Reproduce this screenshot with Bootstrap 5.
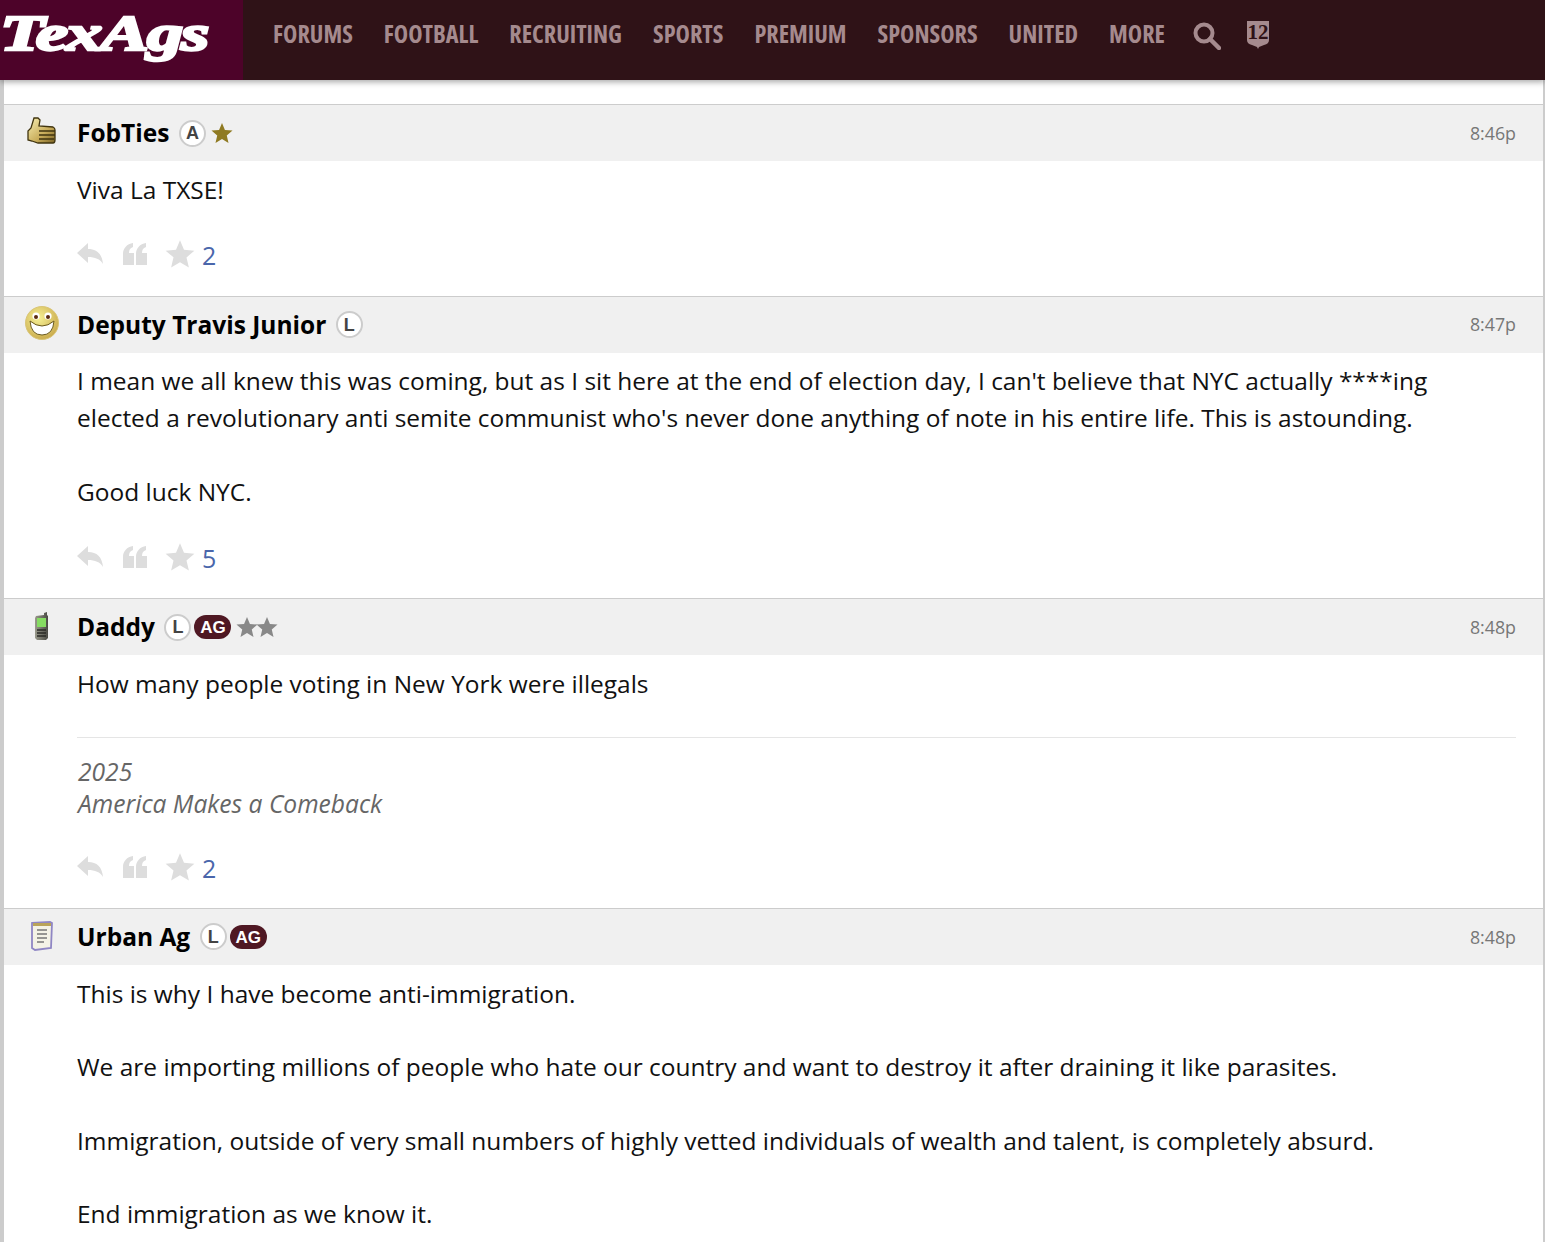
<!DOCTYPE html>
<html lang="en">
<head>
<meta charset="utf-8" />
<meta name="viewport" content="width=device-width, initial-scale=1" />
<title>TexAgs</title>
<link href="https://cdn.jsdelivr.net/npm/bootstrap@5.3.0/dist/css/bootstrap.min.css" rel="stylesheet" />
<style>
  body { font-family: "Open Sans", sans-serif; background: #fff; color: #000; overflow: hidden; height: 1242px; }
  .top-bar { height: 80px; background: #2f1217; padding: 0; box-shadow: 0 2px 6px rgba(0,0,0,.35); position: relative; z-index: 2; flex-wrap: nowrap; justify-content: flex-start; }
  .logo-box { width: 243px; height: 80px; background: #4d0329; overflow: hidden; }
  .logo-text { font-family: "Liberation Serif", serif; font-weight: 700; font-style: italic; font-size: 50px; line-height: 1; color: #fff; display: inline-block; transform: scaleX(1.46); transform-origin: left top; margin: 8px 0 0 0; -webkit-text-stroke: 2.4px #fff; letter-spacing: -1.5px; }
  .top-links { padding-left: 30px; margin-top: -11px; }
  .top-link { font-stretch: 75%; font-weight: 700; font-size: 24.25px; line-height: 1; color: #a58a8e; text-decoration: none; white-space: nowrap; margin-right: 31px; }
  .top-links svg { margin-top: 2px; }
  .search-glyph { margin-left: -3px; }
  .shield-glyph { margin-left: 25px; }
  .page-wrap { border-left: 4px solid #ccc; border-right: 2px solid #ccc; padding-top: 24px; }
  .post-head { height: 57px; background: #f0f0f0; border-top: 1px solid #ccc; padding: 0 27px 0 73px; position: relative; }
  .avatar-icon { position: absolute; left: 20px; top: 9px; width: 36px; height: 36px; }
  .poster { font-weight: 700; font-size: 24.5px; line-height: 1; color: #000; }
  .ring-mark { width: 27px; height: 27px; border: 2px solid #ccc; border-radius: 50%; background: #fff; color: #444; font: 700 18px/1 "Liberation Sans", sans-serif; display: flex; align-items: center; justify-content: center; margin-left: 9.5px; }
  .ag-pill { width: 37px; height: 24px; border-radius: 12px; background: #4f1823; color: #fff; font: 700 17px/25px "Liberation Sans", sans-serif; text-align: center; margin-left: 3px; }
  .rank-star { width: 22px; height: 22px; margin-left: 5px; }
  .rank-star + .rank-star { margin-left: -2px; }
  .star-gold { fill: #8f7a22; }
  .star-gray { fill: #888; }
  .post-time { font-size: 17.8px; color: #777; }
  .post-body { padding: 10.6px 27px 21.4px 73px; font-size: 24.47px; line-height: 36.83px; color: #111; }
  .post-body p { margin: 0; }
  .sig-block { border-top: 1px solid #e5e5e5; margin-top: 34px; padding: 18px 0 1px 1px; font-style: italic; font-size: 24.6px; line-height: 32px; color: #666; }
  .act-row { height: 38px; margin-top: 28px; }
  .act-row svg { display: block; fill: #ddd; margin-top: -2px; }
  .act-quote { margin-left: 20px; }
  .act-star { margin-left: 18px; }
  .act-count { color: #4a66ab; font-size: 25px; line-height: 38px; margin-left: 7px; }
</style>
</head>
<body>

<svg width="0" height="0" class="d-block position-absolute">
  <symbol id="i-star" viewBox="0 0 24 24"><path d="M12 1l3.200 7.600 8.300.7-6.300 5.400 1.900 8.100L12 18.500 4.900 22.800l1.900-8.100L.5 9.300l8.300-.7z"/></symbol>
  <symbol id="i-reply" viewBox="0 0 26 24"><path d="M0 11L11 1v6c9 0 14 5 15 15-3-5-8-7-15-7v6z"/></symbol>
  <symbol id="i-quote" viewBox="0 0 24 24"><path d="M0 23V12C0 6 4 2 10 1v4c-3 1-4 3-4 6h5v12zM13 23V12c0-6 4-10 10-11v4c-3 1-4 3-4 6h5v12z"/></symbol>
</svg>

<nav class="navbar top-bar align-items-center">
  <a class="logo-box d-block text-decoration-none" href="#"><span class="logo-text">TexAgs</span></a>
  <div class="top-links d-flex align-items-center">
    <a class="top-link" href="#">FORUMS</a>
    <a class="top-link" href="#">FOOTBALL</a>
    <a class="top-link" href="#">RECRUITING</a>
    <a class="top-link" href="#">SPORTS</a>
    <a class="top-link" href="#">PREMIUM</a>
    <a class="top-link" href="#">SPONSORS</a>
    <a class="top-link" href="#">UNITED</a>
    <a class="top-link" href="#">MORE</a>
    <svg class="search-glyph" width="28" height="28" viewBox="0 0 28 28"><circle cx="11" cy="11" r="8.500" fill="none" stroke="#a58a8e" stroke-width="4"/><path d="M17 17l9 9" stroke="#a58a8e" stroke-width="4.500" stroke-linecap="round"/></svg>
    <svg class="shield-glyph" width="24" height="29" viewBox="0 0 24 29"><path d="M1 0h22v19q0 4-5 5l-5 2-1 2-1-2-5-2q-5-1-5-5z" fill="#a58a8e"/><text x="12" y="18" text-anchor="middle" font-family="Liberation Serif, serif" font-weight="700" font-size="21" fill="#2f1217">12</text></svg>
  </div>
</nav>

<main class="page-wrap">

  <article>
    <div class="post-head d-flex align-items-center">
      <svg class="avatar-icon" viewBox="0 0 36 36">
        <defs><linearGradient id="gold" x1="0" y1="0" x2="1" y2="1"><stop offset="0" stop-color="#f8f0b4"/><stop offset=".6" stop-color="#c9ad5b"/><stop offset="1" stop-color="#7a6223"/></linearGradient></defs>
        <path d="M10 4l4 0 2 2-1 6 14 1q2 1 2 3v10q0 3-2 3H14l-6-2-4-1v-9l3-3z" fill="url(#gold)" stroke="#40340f" stroke-width="1.300"/>
        <path d="M15 17h16M15 21h16M15 25h15" stroke="#40340f" stroke-width="1.500"/>
      </svg>
      <span class="poster">FobTies</span>
      <span class="ring-mark">A</span>
      <svg class="rank-star star-gold"><use href="#i-star"/></svg>
      <span class="post-time ms-auto">8:46p</span>
    </div>
    <div class="post-body">
      <p>Viva La TXSE!</p>
      <div class="act-row d-flex align-items-center">
        <svg width="26" height="24"><use href="#i-reply"/></svg>
        <svg class="act-quote" width="24" height="24"><use href="#i-quote"/></svg>
        <svg class="act-star" width="30" height="30"><use href="#i-star"/></svg>
        <span class="act-count">2</span>
      </div>
    </div>
  </article>

  <article>
    <div class="post-head d-flex align-items-center">
      <svg class="avatar-icon" viewBox="0 0 36 36">
        <defs><radialGradient id="smile" cx=".4" cy=".35" r=".7"><stop offset="0" stop-color="#f6f094"/><stop offset="1" stop-color="#c9a94a"/></radialGradient></defs>
        <circle cx="18" cy="17" r="16.500" fill="url(#smile)" stroke="#d9c577"/>
        <circle cx="12" cy="10" r="3.600" fill="#fff"/><circle cx="24" cy="10" r="3.600" fill="#fff"/>
        <circle cx="12" cy="11" r="2" fill="#5a2b10"/><circle cx="24" cy="11" r="2" fill="#5a2b10"/>
        <path d="M6 15q12 10 24 0q-1 14-12 14T6 15z" fill="#fff" stroke="#6b5a1d"/>
      </svg>
      <span class="poster">Deputy Travis Junior</span>
      <span class="ring-mark">L</span>
      <span class="post-time ms-auto">8:47p</span>
    </div>
    <div class="post-body">
      <p>I mean we all knew this was coming, but as I sit here at the end of election day, I can't believe that NYC actually ****ing<br>elected a revolutionary anti semite communist who's never done anything of note in his entire life. This is astounding.<br><br>Good luck NYC.</p>
      <div class="act-row d-flex align-items-center">
        <svg width="26" height="24"><use href="#i-reply"/></svg>
        <svg class="act-quote" width="24" height="24"><use href="#i-quote"/></svg>
        <svg class="act-star" width="30" height="30"><use href="#i-star"/></svg>
        <span class="act-count">5</span>
      </div>
    </div>
  </article>

  <article>
    <div class="post-head d-flex align-items-center">
      <svg class="avatar-icon" viewBox="0 0 36 36">
        <defs><linearGradient id="phone" x1="0" y1="0" x2="1" y2="0"><stop offset="0" stop-color="#9a9a8c"/><stop offset="1" stop-color="#4a4a44"/></linearGradient></defs>
        <path d="M20 5l3-1v3l1 1v22l-2 2h-9l-2-2V10l1-2 8-1z" fill="url(#phone)"/>
        <rect x="13" y="10" width="9" height="9" fill="#86dc62"/>
        <path d="M13 22h9M13 25h9M13 28h9" stroke="#2a2a26" stroke-width="1.300"/>
      </svg>
      <span class="poster">Daddy</span>
      <span class="ring-mark">L</span>
      <span class="ag-pill">AG</span>
      <svg class="rank-star star-gray"><use href="#i-star"/></svg>
      <svg class="rank-star star-gray"><use href="#i-star"/></svg>
      <span class="post-time ms-auto">8:48p</span>
    </div>
    <div class="post-body">
      <p>How many people voting in New York were illegals</p>
      <div class="sig-block">2025<br>America Makes a Comeback</div>
      <div class="act-row d-flex align-items-center">
        <svg width="26" height="24"><use href="#i-reply"/></svg>
        <svg class="act-quote" width="24" height="24"><use href="#i-quote"/></svg>
        <svg class="act-star" width="30" height="30"><use href="#i-star"/></svg>
        <span class="act-count">2</span>
      </div>
    </div>
  </article>

  <article>
    <div class="post-head d-flex align-items-center">
      <svg class="avatar-icon" viewBox="0 0 36 36">
        <path d="M8 5l18-1 2 1-1 25-16 2-3-2z" fill="#f4f2e6" stroke="#8f86c4" stroke-width="1.800"/>
        <path d="M9 5h18v3H9z" fill="#b9a35a"/>
        <path d="M13 12h10M13 16h10M13 20h10M13 24h7" stroke="#777" stroke-width="1.500"/>
      </svg>
      <span class="poster">Urban Ag</span>
      <span class="ring-mark">L</span>
      <span class="ag-pill">AG</span>
      <span class="post-time ms-auto">8:48p</span>
    </div>
    <div class="post-body">
      <p>This is why I have become anti-immigration.<br><br>We are importing millions of people who hate our country and want to destroy it after draining it like parasites.<br><br>Immigration, outside of very small numbers of highly vetted individuals of wealth and talent, is completely absurd.<br><br>End immigration as we know it.</p>
    </div>
  </article>

</main>

<script src="https://cdn.jsdelivr.net/npm/bootstrap@5.3.0/dist/js/bootstrap.bundle.min.js"></script>
</body>
</html>
